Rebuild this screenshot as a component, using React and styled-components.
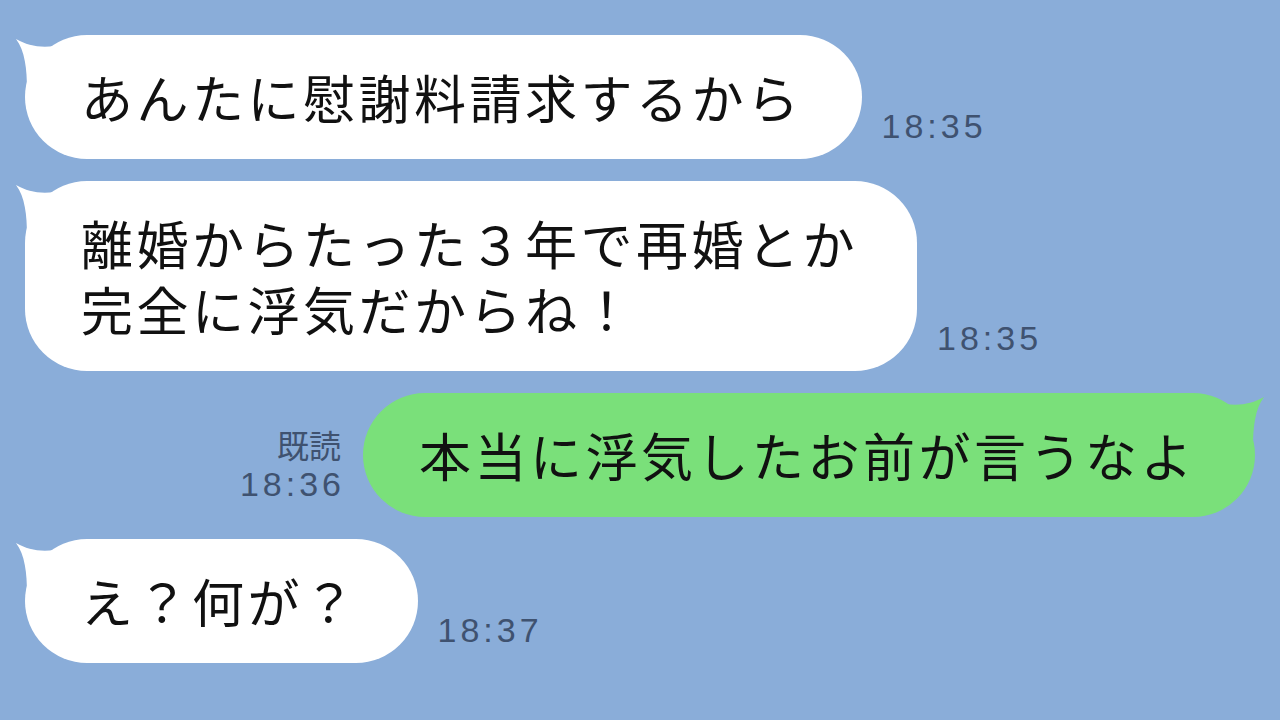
import React from "react";
import styled, { createGlobalStyle } from "styled-components";

const GlobalStyle = createGlobalStyle`
  html, body {
    margin: 0;
    padding: 0;
    background: #8aadd9;
    overflow: hidden;
  }
`;

const Screen = styled.div`
  width: 1280px;
  height: 720px;
  box-sizing: border-box;
  padding: 35px 25px 0 25px;
  display: flex;
  flex-direction: column;
  gap: 22px;
  background: #8aadd9;
  font-family: "Noto Sans CJK JP", "Noto Sans", sans-serif;
`;

const Row = styled.div`
  display: flex;
  align-items: flex-end;
  justify-content: ${(p) => (p.$mine ? "flex-end" : "flex-start")};
  gap: 20px;
`;

const Bubble = styled.div`
  position: relative;
  background: ${(p) => (p.$mine ? "#7ae07a" : "#ffffff")};
  color: #111;
  font-size: 52px;
  letter-spacing: 3.5px;
  line-height: 66px;
  padding: 29px 59px 29px 56px;
  border-radius: 62px;
  white-space: pre;
`;

const Tail = styled.svg`
  position: absolute;
  top: 0;
  width: 60px;
  height: 60px;
  overflow: visible;
  ${(p) => (p.$mine ? "right: -12px; transform: scaleX(-1);" : "left: -12px;")}
`;

const Meta = styled.div`
  display: flex;
  flex-direction: column;
  align-items: flex-end;
  padding-bottom: 13px;
  color: #3f5270;
  font-family: "Liberation Sans", "Noto Sans CJK JP", sans-serif;
`;

const Read = styled.span`
  font-family: "Noto Sans CJK JP", sans-serif;
  font-size: 32px;
  line-height: 40px;
  margin-right: 2px;
`;

const Time = styled.span`
  font-size: 34px;
  line-height: 40px;
  letter-spacing: 4px;
  margin-right: -2px;
`;

function BubbleTail({ mine }) {
  return (
    <Tail $mine={mine} viewBox="0 0 60 60">
      <path
        d="M3 4 C17 12 32 14 52 9 L52 55 L14 55 C14 34 12 16 3 4 Z"
        fill={mine ? "#7ae07a" : "#ffffff"}
      />
    </Tail>
  );
}

function Message({ text, time, mine, read }) {
  const bubble = (
    <Bubble $mine={mine}>
      <BubbleTail mine={mine} />
      {text}
    </Bubble>
  );
  const meta = (
    <Meta>
      {read && <Read>既読</Read>}
      <Time>{time}</Time>
    </Meta>
  );
  return (
    <Row $mine={mine}>
      {mine ? meta : bubble}
      {mine ? bubble : meta}
    </Row>
  );
}

const messages = [
  { text: "あんたに慰謝料請求するから", time: "18:35" },
  { text: "離婚からたった３年で再婚とか\n完全に浮気だからね！", time: "18:35" },
  { text: "本当に浮気したお前が言うなよ", time: "18:36", mine: true, read: true },
  { text: "え？何が？", time: "18:37" },
];

export default function App() {
  return (
    <>
      <GlobalStyle />
      <Screen>
        {messages.map((m, i) => (
          <Message key={i} {...m} />
        ))}
      </Screen>
    </>
  );
}
